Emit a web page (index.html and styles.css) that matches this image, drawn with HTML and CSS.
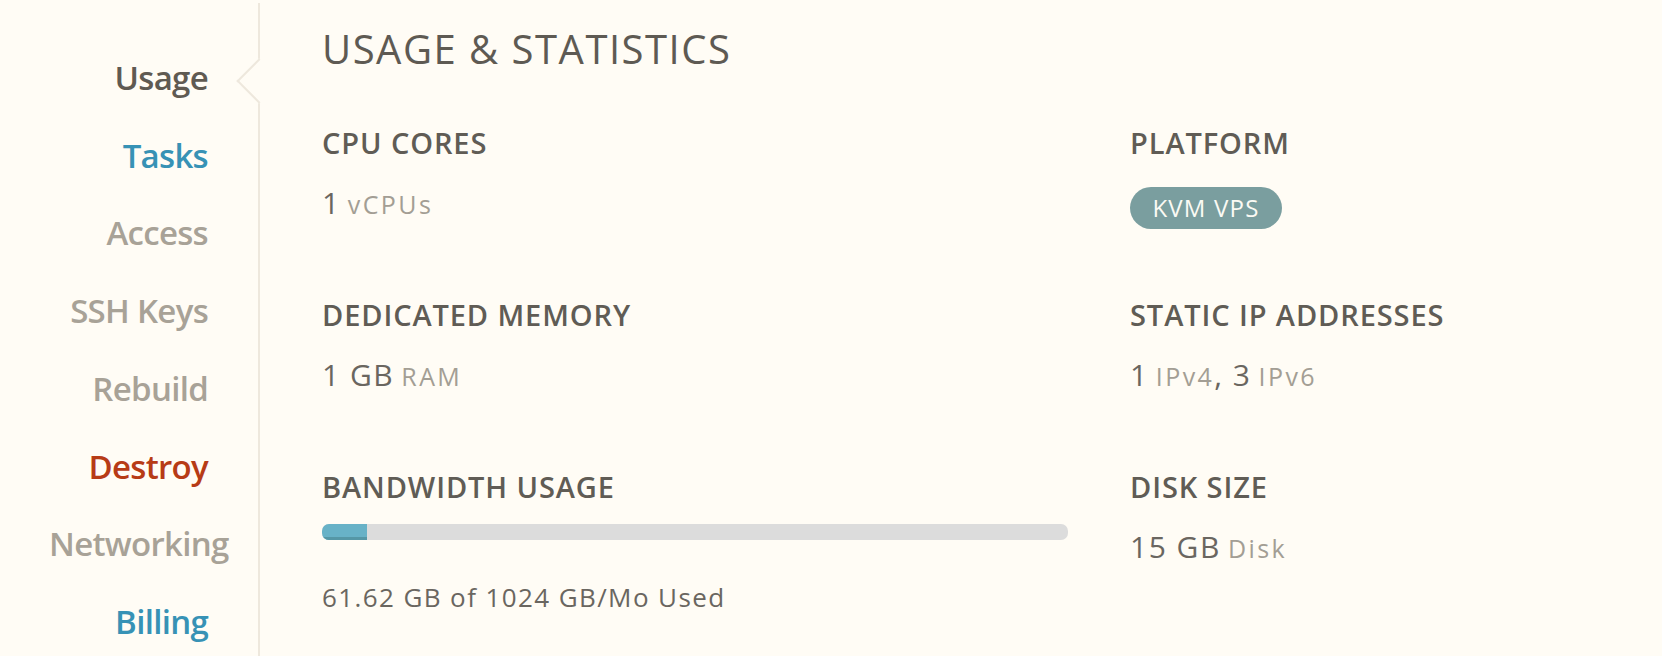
FILE: index.html
```html
<!DOCTYPE html>
<html lang="en">
<head>
<meta charset="utf-8">
<title>Usage &amp; Statistics</title>
<link rel="stylesheet" href="styles.css">
</head>
<body>
<div class="page">
  <aside class="sidebar">
    <ul class="nav">
      <li class="nav-item active">Usage</li>
      <li class="nav-item link">Tasks</li>
      <li class="nav-item muted">Access</li>
      <li class="nav-item muted">SSH Keys</li>
      <li class="nav-item muted">Rebuild</li>
      <li class="nav-item danger">Destroy</li>
      <li class="nav-item muted">Networking</li>
      <li class="nav-item link">Billing</li>
    </ul>
    <span class="notch"></span>
  </aside>
  <main class="main">
    <h1 class="title">USAGE &amp; STATISTICS</h1>
    <div class="stats">
      <div class="stat">
        <div class="label">CPU CORES</div>
        <div class="value"><span class="num">1</span> <span class="unit">vCPUs</span></div>
      </div>
      <div class="stat">
        <div class="label">PLATFORM</div>
        <div class="value"><span class="badge">KVM VPS</span></div>
      </div>
      <div class="stat">
        <div class="label">DEDICATED MEMORY</div>
        <div class="value"><span class="num">1 GB</span> <span class="unit">RAM</span></div>
      </div>
      <div class="stat">
        <div class="label">STATIC IP ADDRESSES</div>
        <div class="value"><span class="num">1</span> <span class="unit">IPv4</span><span class="num">, 3</span> <span class="unit">IPv6</span></div>
      </div>
      <div class="stat">
        <div class="label">BANDWIDTH USAGE</div>
        <div class="bar"><div class="bar-fill" style="width: 6.02%"></div></div>
        <div class="note">61.62 GB of 1024 GB/Mo Used</div>
      </div>
      <div class="stat">
        <div class="label">DISK SIZE</div>
        <div class="value"><span class="num">15 GB</span> <span class="unit">Disk</span></div>
      </div>
    </div>
  </main>
</div>
</body>
</html>
```

FILE: styles.css
```css
html, body {
  margin: 0;
  padding: 0;
}

body {
  background: #fffcf5;
  font-family: "Open Sans", "Noto Sans", "DejaVu Sans", sans-serif;
  color: #605c55;
  height: 656px;
  overflow: hidden;
}

.page {
  display: flex;
  align-items: stretch;
  min-height: 656px;
}

.sidebar {
  position: relative;
  box-sizing: border-box;
  width: 260px;
  flex: 0 0 260px;
  margin-top: 3px;
  padding: 36px 50px 0 49px;
  border-right: 2px solid #eee8dd;
}

.nav {
  list-style: none;
  margin: 0;
  padding: 0;
  text-align: right;
}

.nav-item {
  font-size: 33px;
  line-height: 77.7px;
  font-weight: 600;
  white-space: nowrap;
  letter-spacing: -0.7px;
}

.nav-item.active { color: #5f5a52; }
.nav-item.link { color: #3792b5; }
.nav-item.muted { color: #a8a297; }
.nav-item.danger { color: #b73b16; }

.notch {
  position: absolute;
  top: 62px;
  right: -17px;
  width: 30px;
  height: 30px;
  background: #fffcf5;
  border-left: 2px solid #eee8dd;
  border-bottom: 2px solid #eee8dd;
  transform: rotate(45deg);
}

.main {
  flex: 1;
  padding: 21px 0 0 62px;
}

.title {
  margin: 0 0 46px;
  font-size: 40px;
  line-height: 56px;
  font-weight: 400;
  color: #5e5a53;
  letter-spacing: 1.5px;
}

.stats {
  display: grid;
  grid-template-columns: 746px 1fr;
  column-gap: 62px;
  row-gap: 72px;
}

.label {
  font-size: 29px;
  line-height: 40px;
  font-weight: 600;
  color: #605c55;
  letter-spacing: 0.9px;
}

.value {
  margin-top: 20px;
  line-height: 40px;
  height: 40px;
}

.num {
  font-size: 30px;
  color: #6a6660;
  letter-spacing: 1.5px;
}

.unit {
  margin-left: 3px;
  font-size: 25px;
  color: #a39e94;
  letter-spacing: 2.4px;
}

.badge {
  display: inline-block;
  margin-top: 4px;
  width: 152px;
  height: 42px;
  line-height: 42px;
  border-radius: 21px;
  background: #7a9e9f;
  color: #fbfaf4;
  font-size: 24px;
  letter-spacing: 1.2px;
  text-align: center;
  vertical-align: top;
}

.bar {
  margin-top: 17px;
  height: 16px;
  border-radius: 7px;
  background: #dcdcdc;
  overflow: hidden;
}

.bar-fill {
  height: 13px;
  background: #68b2c7;
  border-bottom: 3px solid #5597a6;
}

.note {
  margin-top: 37px;
  font-size: 26px;
  line-height: 40px;
  color: #6a6660;
  letter-spacing: 1.4px;
}
```
